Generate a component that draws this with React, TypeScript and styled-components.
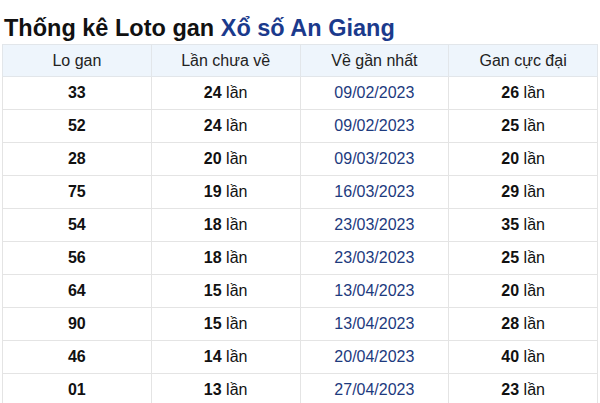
import styled, { createGlobalStyle } from "styled-components";

const GlobalStyle = createGlobalStyle`
  html, body {
    margin: 0;
    padding: 0;
    background: #ffffff;
    font-family: "Liberation Sans", Arial, sans-serif;
  }
`;

interface IRow {
  number: string;
  missing: number;
  lastDate: string;
  maxGap: number;
}

const rows: IRow[] = [
  { number: "33", missing: 24, lastDate: "09/02/2023", maxGap: 26 },
  { number: "52", missing: 24, lastDate: "09/02/2023", maxGap: 25 },
  { number: "28", missing: 20, lastDate: "09/03/2023", maxGap: 20 },
  { number: "75", missing: 19, lastDate: "16/03/2023", maxGap: 29 },
  { number: "54", missing: 18, lastDate: "23/03/2023", maxGap: 35 },
  { number: "56", missing: 18, lastDate: "23/03/2023", maxGap: 25 },
  { number: "64", missing: 15, lastDate: "13/04/2023", maxGap: 20 },
  { number: "90", missing: 15, lastDate: "13/04/2023", maxGap: 28 },
  { number: "46", missing: 14, lastDate: "20/04/2023", maxGap: 40 },
  { number: "01", missing: 13, lastDate: "27/04/2023", maxGap: 23 },
];

const headers = ["Lo gan", "Lần chưa về", "Về gần nhất", "Gan cực đại"];

const App = () => {
  return (
    <Page>
      <GlobalStyle />
      <Title>
        Thống kê Loto gan <Highlight>Xổ số An Giang</Highlight>
      </Title>
      <Table>
        <thead>
          <tr>
            {headers.map((h) => (
              <HeadCell key={h}>{h}</HeadCell>
            ))}
          </tr>
        </thead>
        <tbody>
          {rows.map((r) => (
            <tr key={r.number}>
              <Cell>
                <strong>{r.number}</strong>
              </Cell>
              <Cell>
                <strong>{r.missing}</strong> lần
              </Cell>
              <Cell $blue>{r.lastDate}</Cell>
              <Cell>
                <strong>{r.maxGap}</strong> lần
              </Cell>
            </tr>
          ))}
        </tbody>
      </Table>
    </Page>
  );
};

const Page = styled.div`
  padding: 0 2px;
`;

const Title = styled.h2`
  margin: 0;
  padding: 15px 0 0 2px;
  height: 29px;
  font-size: 23.5px;
  font-weight: bold;
  color: #111111;
  line-height: 26px;
  white-space: nowrap;
`;

const Highlight = styled.span`
  color: #1b3a8c;
`;

const Table = styled.table`
  width: 596px;
  border-collapse: collapse;
  table-layout: fixed;
  font-size: 16px;
`;

const HeadCell = styled.th`
  height: 31px;
  padding: 0;
  background: #eef5fc;
  border: 1px solid #e2e6ea;
  font-weight: normal;
  color: #222222;
  text-align: center;
`;

const Cell = styled.td<{ $blue?: boolean }>`
  height: 32px;
  padding: 0;
  border: 1px solid #e4e4e4;
  text-align: center;
  color: ${(props) => (props.$blue ? "#1d3a7e" : "#111111")};

  strong {
    font-weight: bold;
  }
`;

export default App;
